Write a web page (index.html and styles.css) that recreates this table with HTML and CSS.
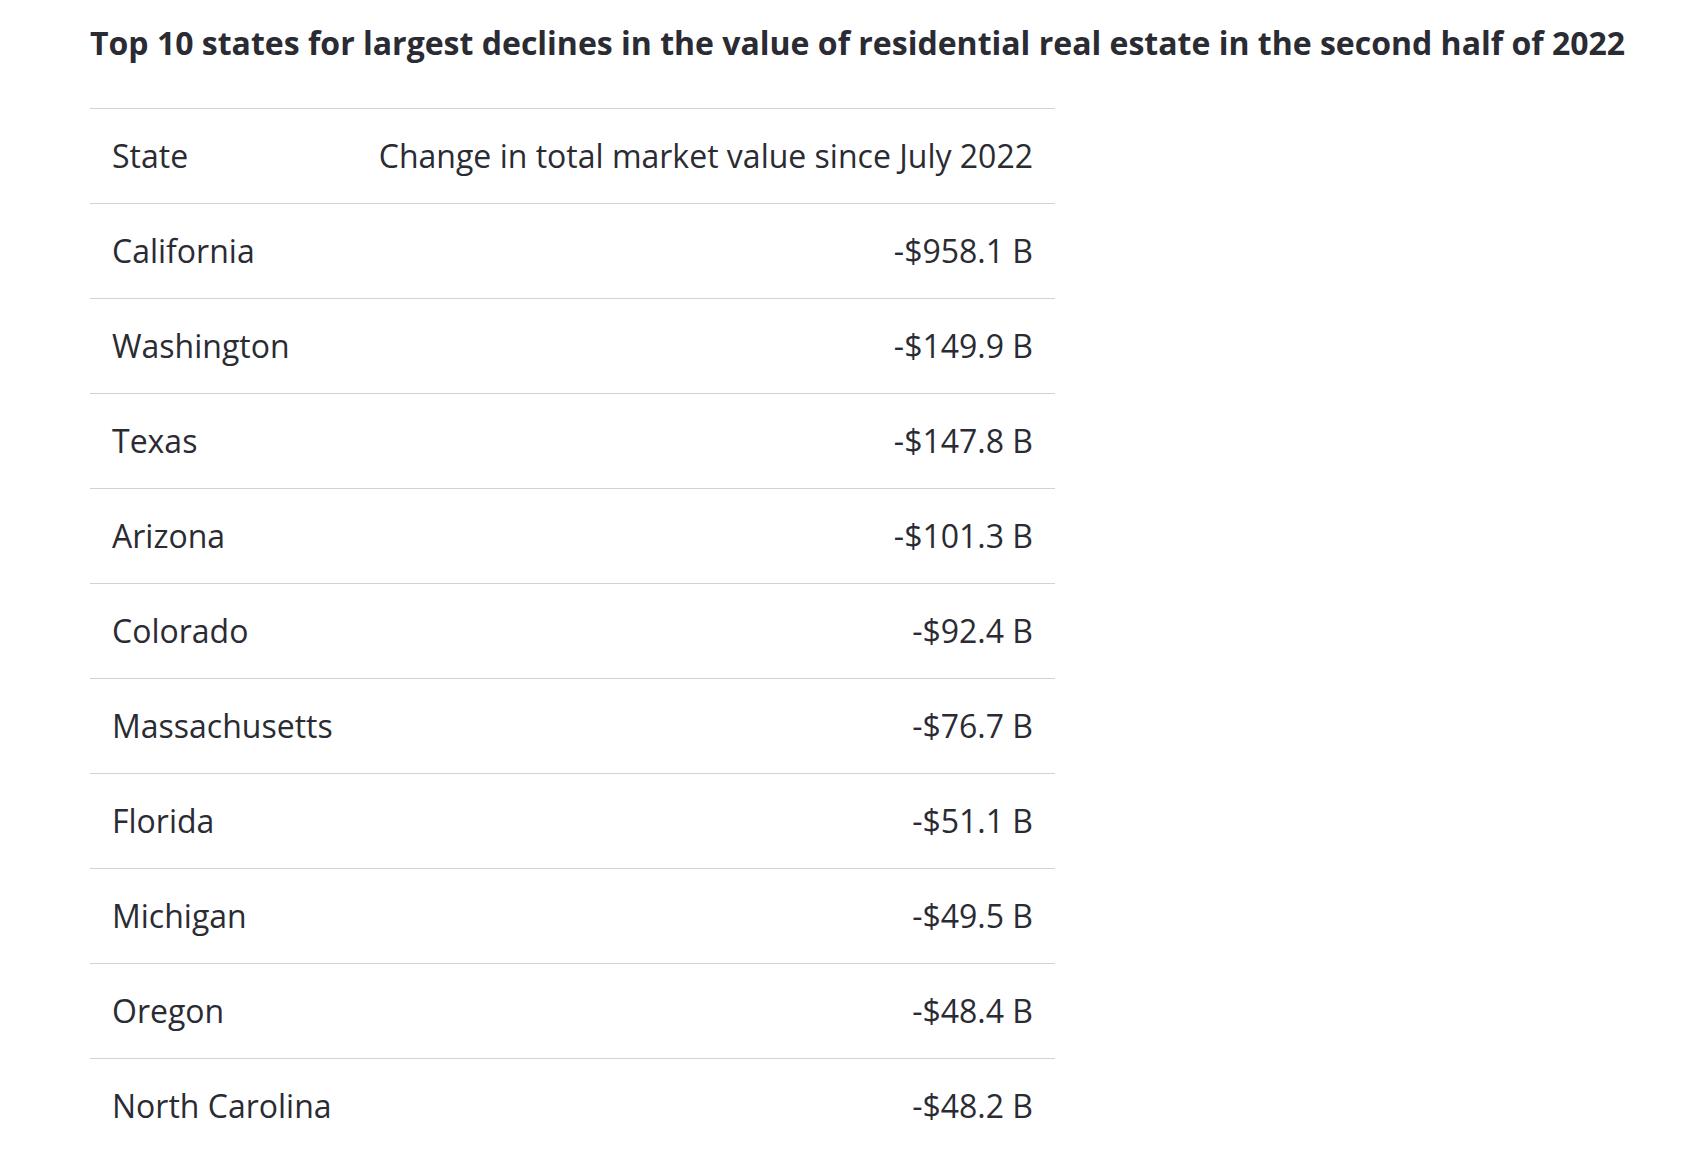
FILE: index.html
```html
<!DOCTYPE html>
<html lang="en">
<head>
<meta charset="utf-8">
<title>Top 10 states</title>
<link rel="stylesheet" href="styles.css">
</head>
<body>
<main class="page">
  <h2 class="title">Top 10 states for largest declines in the value of residential real estate in the second half of 2022</h2>
  <table class="data">
    <thead>
      <tr><th class="state">State</th><th class="value">Change in total market value since July 2022</th></tr>
    </thead>
    <tbody>
      <tr><td class="state">California</td><td class="value">-$958.1 B</td></tr>
      <tr><td class="state">Washington</td><td class="value">-$149.9 B</td></tr>
      <tr><td class="state">Texas</td><td class="value">-$147.8 B</td></tr>
      <tr><td class="state">Arizona</td><td class="value">-$101.3 B</td></tr>
      <tr><td class="state">Colorado</td><td class="value">-$92.4 B</td></tr>
      <tr><td class="state">Massachusetts</td><td class="value">-$76.7 B</td></tr>
      <tr><td class="state">Florida</td><td class="value">-$51.1 B</td></tr>
      <tr><td class="state">Michigan</td><td class="value">-$49.5 B</td></tr>
      <tr><td class="state">Oregon</td><td class="value">-$48.4 B</td></tr>
      <tr><td class="state">North Carolina</td><td class="value">-$48.2 B</td></tr>
    </tbody>
  </table>
</main>
</body>
</html>
```
FILE: styles.css
```css
html, body {
  margin: 0;
  padding: 0;
  background: #ffffff;
}
body {
  font-family: "Open Sans", "Liberation Sans", sans-serif;
  color: #2a2b33;
}
.page {
  padding: 22px 0 0 90px;
}
.title {
  margin: 0 0 44px 0;
  font-size: 32px;
  line-height: 42px;
  font-weight: 700;
  white-space: nowrap;
}
.data {
  width: 965px;
  border-collapse: collapse;
  font-size: 32px;
  line-height: 42px;
}
.data th,
.data td {
  font-weight: 400;
  padding: 26px 22px 26px 22px;
  border-top: 1px solid #d1d1d6;
  white-space: nowrap;
}
.data .state {
  text-align: left;
}
.data .value {
  text-align: right;
}
```
